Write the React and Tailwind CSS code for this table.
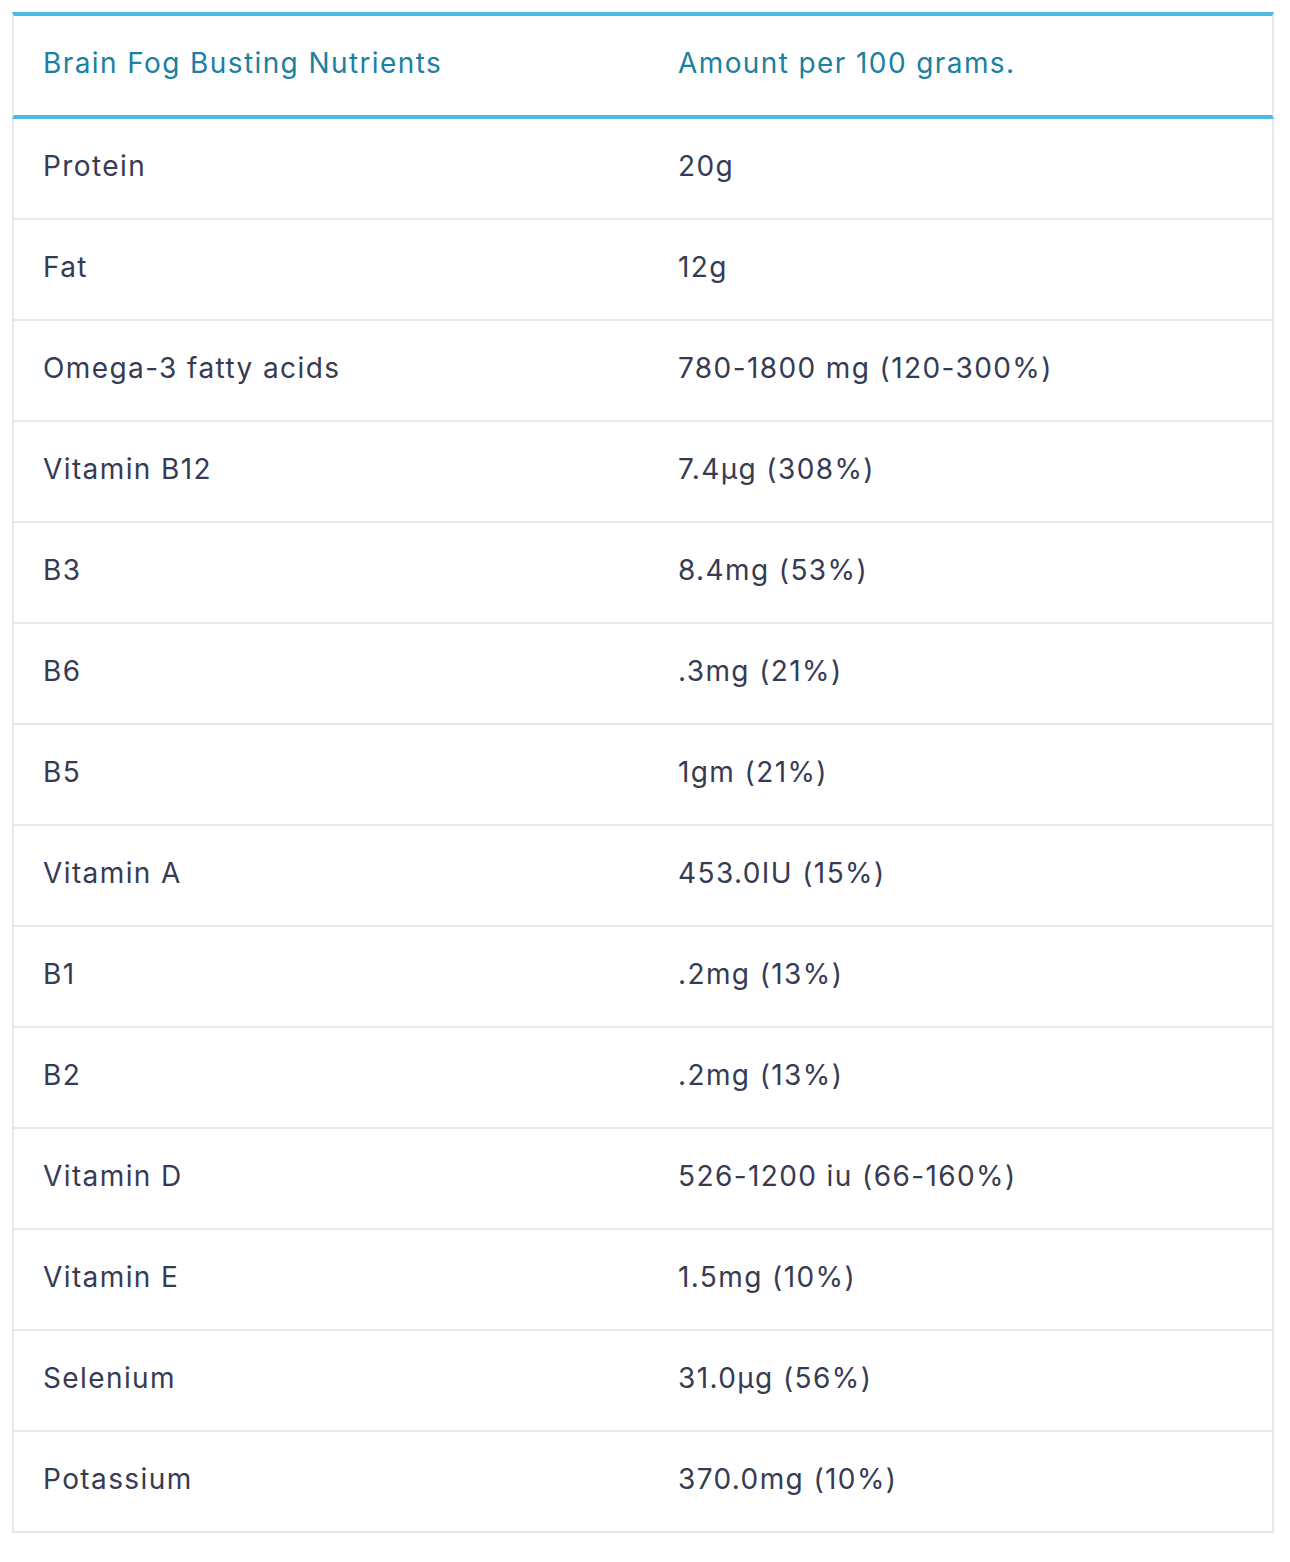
const rows = [
  ["Protein", "20g"],
  ["Fat", "12g"],
  ["Omega-3 fatty acids", "780-1800 mg (120-300%)"],
  ["Vitamin B12", "7.4μg (308%)"],
  ["B3", "8.4mg (53%)"],
  ["B6", ".3mg (21%)"],
  ["B5", "1gm (21%)"],
  ["Vitamin A", "453.0IU (15%)"],
  ["B1", ".2mg (13%)"],
  ["B2", ".2mg (13%)"],
  ["Vitamin D", "526-1200 iu (66-160%)"],
  ["Vitamin E", "1.5mg (10%)"],
  ["Selenium", "31.0μg (56%)"],
  ["Potassium", "370.0mg (10%)"],
];

export default function App() {
  return (
    <div className="min-h-screen bg-white pt-3 pl-3 font-['Inter',sans-serif] text-[28px] tracking-[1.4px]">
      <div className="w-[1262px]">
        {/* Header */}
        <div className="grid grid-cols-[634px_1fr] h-[107px] items-center border-x-2 border-x-[#e8e8e8] border-y-4 border-y-[#4db9e6] text-[#1b80a1]">
          <div className="pl-[29px] pb-[6px]">Brain Fog Busting Nutrients</div>
          <div className="pl-[30px] pb-[6px]">Amount per 100 grams.</div>
        </div>

        {/* Rows */}
        <div className="border-x-2 border-[#e8e8e8] text-[#363b53]">
          {rows.map(([name, amount]) => (
            <div
              key={name}
              className="grid grid-cols-[632px_1fr] h-[101px] items-center border-b-2 border-[#e8e8e8]"
            >
              <div className="pl-[29px] pb-[6px]">{name}</div>
              <div className="pl-[32px] pb-[6px]">{amount}</div>
            </div>
          ))}
        </div>
      </div>
    </div>
  );
}
